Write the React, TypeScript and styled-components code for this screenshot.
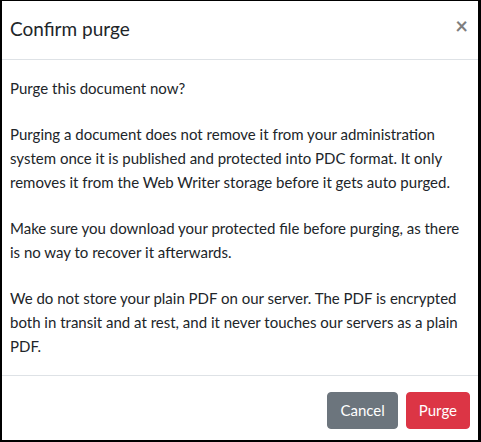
import React from 'react';
import styled, { createGlobalStyle } from 'styled-components';

const GlobalStyle = createGlobalStyle`
  html, body {
    margin: 0;
    padding: 0;
    background: #fff;
  }
  * {
    box-sizing: border-box;
  }
`;

const Frame = styled.div`
  width: 481px;
  height: 442px;
  border-style: solid;
  border-color: #000;
  border-width: 1px 3px 2px 2px;
  background: #fff;
  display: flex;
  flex-direction: column;
  font-family: Lato, "Noto Sans", sans-serif;
  color: #212529;
`;

const Header = styled.div`
  display: flex;
  align-items: flex-start;
  justify-content: space-between;
  padding: 13px 10px 15px 8px;
  border-bottom: 1px solid #dee2e6;
`;

const Title = styled.h5`
  margin: 0;
  font-size: 19px;
  font-weight: 400;
  line-height: 30px;
`;

const CloseButton = styled.button`
  border: 0;
  background: transparent;
  padding: 0;
  margin-top: 1px;
  font-family: Lato, sans-serif;
  font-size: 22px;
  font-weight: 700;
  line-height: 22px;
  color: #000;
  opacity: 0.5;
  text-shadow: 0 1px 0 #fff;
  cursor: pointer;
`;

const Body = styled.div`
  flex: 1;
  padding: 16px 14px 17px 8px;
`;

const Paragraph = styled.p`
  margin: 0 0 22px;
  font-size: 15px;
  line-height: 24px;
  &:last-child {
    margin-bottom: 0;
  }
`;

const Footer = styled.div`
  display: flex;
  justify-content: flex-end;
  align-items: flex-start;
  gap: 8px;
  padding: 16px 8px 0 8px;
  height: 65px;
  border-top: 1px solid #dee2e6;
`;

const Button = styled.button<{ $variant: 'secondary' | 'danger' }>`
  font-family: Lato, sans-serif;
  font-size: 15px;
  line-height: 23px;
  padding: 6px 12px;
  border-radius: 4px;
  border: 1px solid ${p => (p.$variant === 'danger' ? '#dc3545' : '#6c757d')};
  background: ${p => (p.$variant === 'danger' ? '#dc3545' : '#6c757d')};
  color: #fff;
  cursor: pointer;
`;

export default function App() {
  return (
    <>
      <GlobalStyle />
      <Frame>
        <Header>
          <Title>Confirm purge</Title>
          <CloseButton aria-label="Close">×</CloseButton>
        </Header>
        <Body>
          <Paragraph>Purge this document now?</Paragraph>
          <Paragraph>
            Purging a document does not remove it from your administration system once it is published and
            protected into PDC format. It only removes it from the Web Writer storage before it gets auto purged.
          </Paragraph>
          <Paragraph>
            Make sure you download your protected file before purging, as there is no way to recover it afterwards.
          </Paragraph>
          <Paragraph>
            We do not store your plain PDF on our server. The PDF is encrypted both in transit and at rest, and it
            never touches our servers as a plain PDF.
          </Paragraph>
        </Body>
        <Footer>
          <Button $variant="secondary">Cancel</Button>
          <Button $variant="danger">Purge</Button>
        </Footer>
      </Frame>
    </>
  );
}
